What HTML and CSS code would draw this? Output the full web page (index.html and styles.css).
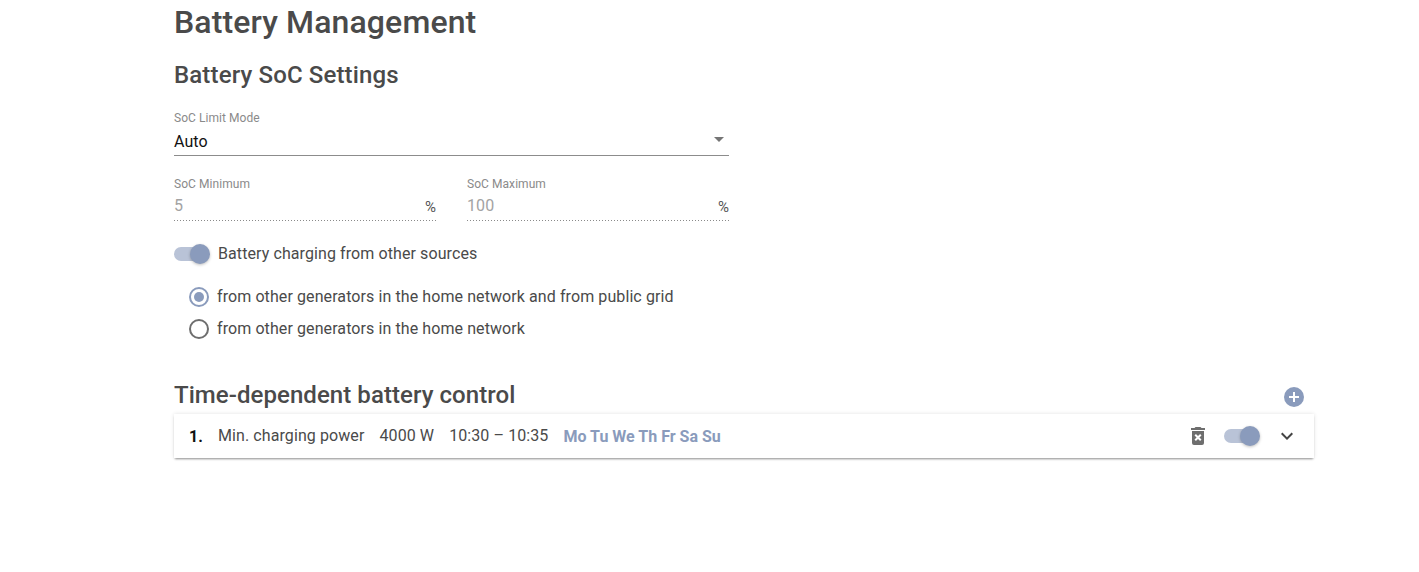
FILE: index.html
```html
<!DOCTYPE html>
<html lang="en">
<head>
<meta charset="utf-8">
<title>Battery Management</title>
<link rel="stylesheet" href="styles.css">
</head>
<body>
<main class="page">
  <h1 class="title">Battery Management</h1>
  <h2 class="section-title">Battery SoC Settings</h2>
  <form class="form">
    <div class="select">
      <div class="label">SoC Limit Mode</div>
      <div class="select-row">
        <span class="select-value">Auto</span>
        <span class="caret"></span>
      </div>
    </div>
    <div class="fields">
      <div class="field">
        <div class="label">SoC Minimum</div>
        <div class="field-row"><span class="field-value">5</span><span class="unit">%</span></div>
      </div>
      <div class="field">
        <div class="label">SoC Maximum</div>
        <div class="field-row"><span class="field-value">100</span><span class="unit">%</span></div>
      </div>
    </div>
    <div class="switch-row">
      <span class="switch"><span class="switch-track"></span><span class="switch-thumb"></span></span>
      <span class="text">Battery charging from other sources</span>
    </div>
    <div class="radios">
      <div class="radio-row">
        <span class="radio radio-on"><span class="radio-dot"></span></span>
        <span class="text">from other generators in the home network and from public grid</span>
      </div>
      <div class="radio-row">
        <span class="radio"></span>
        <span class="text">from other generators in the home network</span>
      </div>
    </div>
  </form>
  <div class="control-head">
    <h2 class="section-title flush">Time-dependent battery control</h2>
    <svg class="add" viewBox="0 0 22 22" width="22" height="22" aria-label="Add">
      <circle cx="11" cy="11" r="10" fill="#8a9bbc"/>
      <path d="M11 6v10M6 11h10" stroke="#fff" stroke-width="2" fill="none"/>
    </svg>
  </div>
  <div class="card">
    <span class="index">1.</span>
    <span class="text">Min. charging power</span>
    <span class="text gap">4000 W</span>
    <span class="text gap">10:30 – 10:35</span>
    <span class="days">Mo Tu We Th Fr Sa Su</span>
    <span class="spacer"></span>
    <svg class="trash" viewBox="0 0 24 24" width="24" height="24" aria-label="Delete">
      <path fill="#6e6e6e" d="M6 19a2 2 0 0 0 2 2h8a2 2 0 0 0 2-2V7H6v12zM8.5 11.4l1.4-1.4L12 12.1 14.1 10l1.4 1.4-2.1 2.1 2.1 2.1-1.4 1.4-2.1-2.1-2.1 2.1-1.4-1.4 2.1-2.1-2.1-2.1zM15.5 4l-1-1h-5l-1 1H5v2h14V4z"/>
    </svg>
    <span class="switch card-switch"><span class="switch-track"></span><span class="switch-thumb"></span></span>
    <svg class="chevron" viewBox="0 0 24 24" width="24" height="24" aria-label="Expand">
      <path d="M7.41 8.59 12 13.17l4.59-4.58L18 10l-6 6-6-6z" fill="#444"/>
    </svg>
  </div>
</main>
</body>
</html>
```
FILE: styles.css
```css
* { box-sizing: border-box; }
html, body { margin: 0; padding: 0; background: #fff; }
body { font-family: Roboto, "Noto Sans", sans-serif; color: #4a4a4a; height: 572px; overflow: hidden; }
.page { width: 1140px; margin-left: 174px; }
.title { margin: 0; padding-top: 3px; font-size: 32px; line-height: 38px; font-weight: 500; letter-spacing: 0.12px; color: #4a4a4a; }
.section-title { margin: 18px 0 0; font-size: 24px; line-height: 32px; font-weight: 500; letter-spacing: 0.14px; color: #4a4a4a; }
.section-title.flush { margin: 0; letter-spacing: 0.06px; }
.form { width: 555px; margin-top: 19px; }
.label { font-size: 12px; line-height: 16px; letter-spacing: 0.06px; color: #8a8a8a; }
.select-row { display: flex; align-items: center; justify-content: space-between; height: 30px; padding-top: 3px; border-bottom: 1px solid #8c8c8c; }
.select-value { font-size: 16px; line-height: 20px; letter-spacing: 0.09px; color: #111; }
.caret { width: 0; height: 0; margin-right: 5px; margin-bottom: 5px; border-left: 5px solid transparent; border-right: 5px solid transparent; border-top: 5px solid #757575; }
.fields { display: grid; grid-template-columns: 262px 262px; column-gap: 31px; margin-top: 20px; }
.field-row { display: flex; justify-content: space-between; align-items: center; height: 29px; padding-bottom: 2px; line-height: 20px; background-image: linear-gradient(to right, #8a8a8a 0, #8a8a8a 1px, transparent 1px); background-size: 3px 1px; background-repeat: repeat-x; background-position: left bottom; }
.field-value { font-size: 16px; letter-spacing: 0.09px; color: #a3a3a3; }
.unit { font-size: 15px; color: #555; transform: translateY(1px); }
.switch-row { display: flex; align-items: center; gap: 8px; margin-top: 21px; height: 24px; }
.switch { position: relative; display: inline-block; width: 36px; height: 20px; flex: none; }
.switch-track { position: absolute; left: 0; top: 3px; width: 34px; height: 14px; border-radius: 7px; background: #b9c3d7; }
.switch-thumb { position: absolute; right: 0; top: 0; width: 20px; height: 20px; border-radius: 50%; background: #8a9bbc; box-shadow: 0 1px 3px rgba(0,0,0,.25); }
.text { font-size: 16px; line-height: 20px; letter-spacing: 0.09px; color: #4a4a4a; white-space: nowrap; }
.radios { margin-top: 21px; padding-left: 15px; display: flex; flex-direction: column; gap: 12px; }
.radio-row { display: flex; align-items: center; gap: 8px; height: 20px; }
.radio { width: 20px; height: 20px; border-radius: 50%; border: 2px solid #6e6e6e; display: flex; align-items: center; justify-content: center; flex: none; }
.radio-on { border-color: #8a9bbc; }
.radio-dot { width: 10px; height: 10px; border-radius: 50%; background: #8a9bbc; }
.control-head { display: flex; justify-content: space-between; align-items: flex-end; margin-top: 40px; height: 32px; }
.add { margin-right: 9px; margin-bottom: 3px; }
.card { display: flex; align-items: center; height: 44px; margin-top: 3px; padding: 0 15px; background: #fff; box-shadow: 0 2px 2px -1px rgba(0,0,0,.4), 0 0 4px rgba(0,0,0,.12); }
.index { width: 29px; font-size: 16px; font-weight: 700; color: #111; }
.gap { margin-left: 15px; }
.days { margin-left: 15px; font-size: 16px; font-weight: 700; color: #8a9bbc; white-space: nowrap; }
.spacer { flex: 1; }
.card-switch { margin-left: 14px; }
.chevron { margin-left: 15px; }
```
